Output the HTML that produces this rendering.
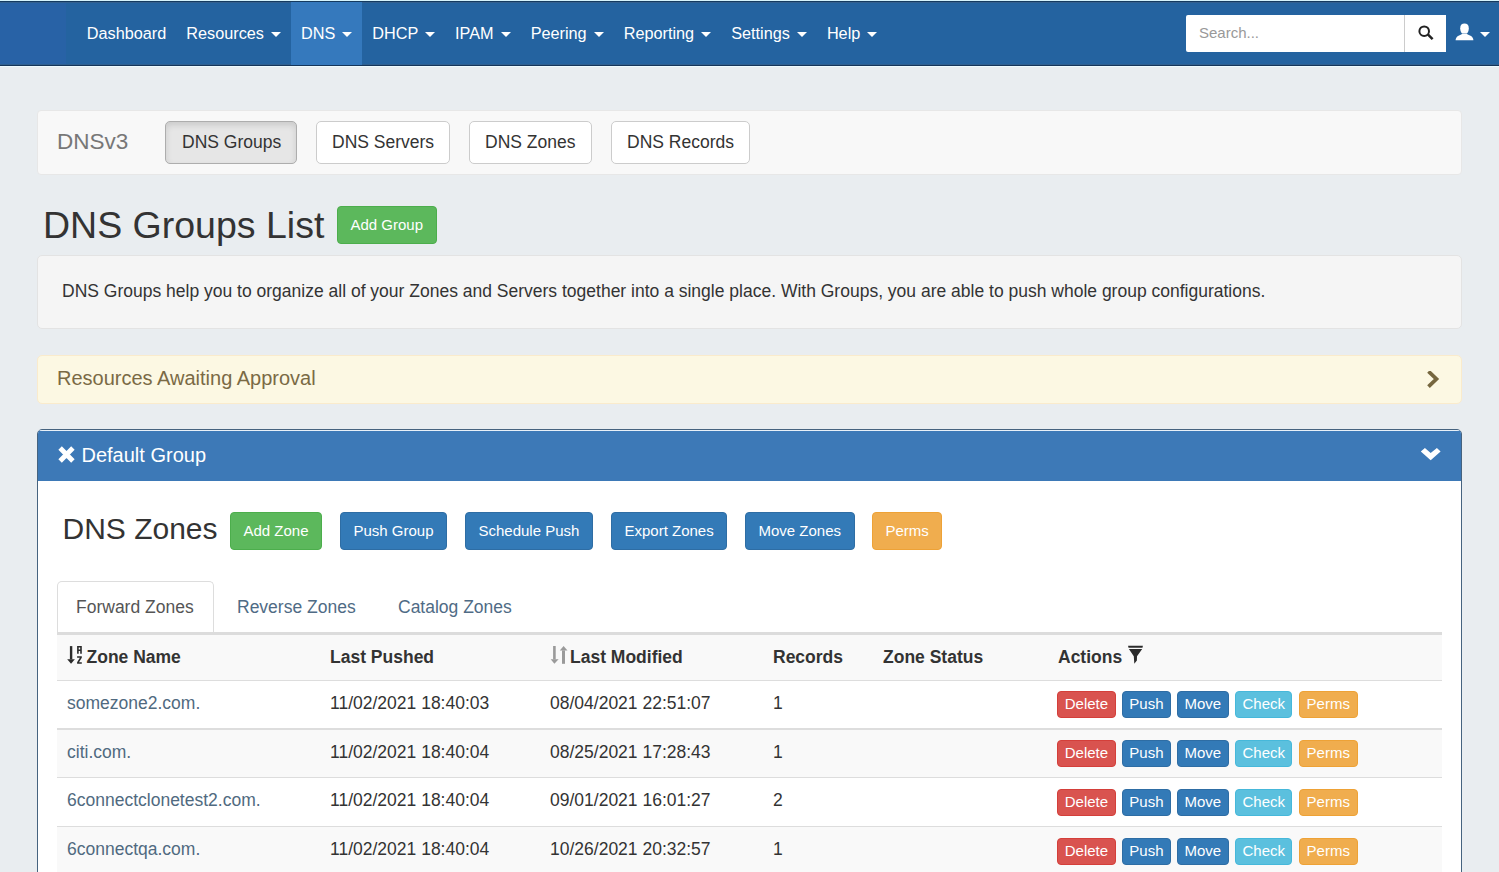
<!DOCTYPE html>
<html><head><meta charset="utf-8">
<style>
*{box-sizing:border-box}
html,body{margin:0;padding:0}
body{width:1499px;height:872px;overflow:hidden;background:#e9edf0;font-family:"Liberation Sans",sans-serif;color:#333;position:relative;font-size:17.5px;line-height:1.428571}
.abs{position:absolute}
/* navbar */
.nav{position:absolute;left:0;top:1px;width:1499px;height:65px;background:#2463a0;border-top:1px solid #143a60;border-bottom:1px solid #15355a}
.hl{position:absolute;left:0;width:1499px;height:1px}
.brand{position:absolute;left:0;top:0;width:66px;height:63px;background:#2862a6}
.menu{position:absolute;left:76.8px;top:0;height:63px;display:flex}
.menu a{display:block;height:63px;line-height:62px;padding:0 10px;color:#fff;font-size:16.25px;text-decoration:none;white-space:nowrap}
.menu a.act{background:#3579bd}
.caret{display:inline-block;width:0;height:0;margin-left:2.5px;vertical-align:middle;border-top:5px solid;border-left:5px solid transparent;border-right:5px solid transparent;position:relative;top:0}
.search{position:absolute;left:1186px;top:13px;width:260px;height:37px;background:#fff;border-radius:2px}
.search .ph{position:absolute;left:13px;top:0;line-height:36px;font-size:15px;color:#999}
.search .btn{position:absolute;left:218px;top:0;width:42px;height:37px;border-left:1px solid #ccc;background:#fff}
/* sub panel */
.sub{position:absolute;left:37px;top:110px;width:1425px;height:65px;background:#f8f8f8;border:1px solid #e7e7e7;border-radius:4px}
.sub .t{position:absolute;left:19px;top:0;line-height:62px;font-size:22.5px;color:#777}
.b{display:inline-block;border:1.25px solid #ccc;border-radius:5px;background:#fff;color:#333;white-space:nowrap;text-align:center}
.sbtn{position:absolute;top:10px;height:43px;line-height:40.5px;font-size:17.5px;padding:0 15px}
.sbtn.on{background:#e6e6e6;border-color:#adadad;box-shadow:inset 0 3px 6px rgba(0,0,0,.125)}
h2{position:absolute;left:43px;top:200px;margin:0;font-size:37.5px;font-weight:400;line-height:50px;color:#333}
.bs{position:absolute;height:37.5px;line-height:35px;font-size:15px;padding:0 12.5px;border-radius:4px;color:#fff}
.green{background:#5cb85c;border-color:#4cae4c}
.blue{background:#337ab7;border-color:#2e6da4}
.orange{background:#f0ad4e;border-color:#eea236}
.red{background:#d9534f;border-color:#d43f3a}
.cyan{background:#5bc0de;border-color:#46b8da}
.well{position:absolute;left:37px;top:255px;width:1425px;height:74px;background:#f5f5f5;border:1px solid #e3e3e3;border-radius:5px}
.well .t{position:absolute;left:24px;top:23px;font-size:17.5px;line-height:25px;color:#333}
.alert{position:absolute;left:37px;top:355px;width:1425px;height:48.5px;background:#fcf8e3;border:1px solid #faebcc;border-radius:5px}
.alert .t{position:absolute;left:19px;top:-1.5px;line-height:46px;font-size:20px;color:#7a6a45}
.panel{position:absolute;left:37px;top:429px;width:1425px;height:460px;background:#fff;border:1px solid #46637f;border-radius:5px;overflow:hidden}
.ph{}
.phead{position:absolute;left:0;top:0;width:1423px;height:51px;background:#3d79b7;border-top:1px solid #e8f0f8}
.phead .t{position:absolute;left:43.5px;top:0;line-height:49px;font-size:20px;color:#fff}
h3{position:absolute;left:24.5px;top:79px;margin:0;font-size:30px;font-weight:400;line-height:40px;color:#333}
.tabs{position:absolute;left:19px;top:151px;width:1385px;height:54px;border-bottom:3px solid #dcdcdc}
.tab{position:absolute;top:0;height:51px;line-height:53px;font-size:17.5px;color:#4f6b85}
.tab.on{line-height:51px;background:#fff;border:1px solid #ddd;border-bottom:0;border-radius:5px 5px 0 0;color:#555}
table{position:absolute;left:19px;top:205px;width:1385px;border-collapse:separate;border-spacing:0}
td,th{padding:0 10px;font-size:17.5px;text-align:left;vertical-align:middle;white-space:nowrap}
th{font-weight:700;height:45px;padding-top:0;background:#f9f9f9}
td{height:49px;border-top:1px solid #ddd;padding-bottom:2px}
tr.g td{background:#f9f9f9}
tr.r1 td{height:48px}
tr.r2 td{height:49px;border-top-width:2px}
tr.r3 td{height:49px;padding-bottom:4px}
tr.r4 td{padding-bottom:4px}
tr td.act{padding-left:9px;padding-bottom:0}
td a{color:#506a80;text-decoration:none}
.xs{display:inline-block;height:27px;line-height:24.5px;font-size:15px;padding:0;border-radius:4px;color:#fff;margin-right:6.4px}
</style></head><body>
<div class="hl" style="top:0;background:#d5f3fc"></div><div class="hl" style="top:66px;background:#eefbff"></div>
<div class="nav"><div class="brand"></div><div class="hl" style="top:0;background:#33608f"></div><div class="hl" style="top:62px;background:#30608f"></div>

  <div class="menu">
    <a>Dashboard</a>
    <a>Resources <span class="caret"></span></a>
    <a class="act">DNS <span class="caret"></span></a>
    <a>DHCP <span class="caret"></span></a>
    <a>IPAM <span class="caret"></span></a>
    <a>Peering <span class="caret"></span></a>
    <a>Reporting <span class="caret"></span></a>
    <a>Settings <span class="caret"></span></a>
    <a>Help <span class="caret"></span></a>
  </div>
  <div class="search"><span class="ph">Search...</span><div class="btn">
    <svg width="42" height="37" viewBox="0 0 42 37"><circle cx="19.2" cy="16.2" r="4.8" fill="none" stroke="#222" stroke-width="2"/><line x1="22.8" y1="19.4" x2="27.6" y2="24.2" stroke="#222" stroke-width="2.5" stroke-linecap="butt"/></svg>
  </div></div>
  <svg class="abs" style="left:1455px;top:21px" width="19" height="18" viewBox="0 0 19 18"><path d="M5.2 5.2 C5.2 1.8 7 0.4 9.5 0.4 C12 0.4 13.8 1.8 13.8 5.2 C13.8 8 12.6 10 11.8 10.6 L7.2 10.6 C6.4 10 5.2 8 5.2 5.2 Z" fill="#fff"/><path d="M0.6 17.2 C0.6 15.5 1.6 13.8 3.5 12.8 C5 12 6.5 11.4 7.5 10.8 L11.5 10.8 C12.5 11.4 14 12 15.5 12.8 C17.4 13.8 18.4 15.5 18.4 17.2 Z" fill="#fff"/></svg>
  <span class="caret" style="position:absolute;left:1480px;top:30px;color:#fff;margin:0"></span>
</div>

<div class="sub">
  <span class="t">DNSv3</span>
  <span class="b sbtn on" style="left:127px;padding:0 15px 0 16px">DNS Groups</span>
  <span class="b sbtn" style="left:278px">DNS Servers</span>
  <span class="b sbtn" style="left:431px;padding:0 16px 0 15px">DNS Zones</span>
  <span class="b sbtn" style="left:573px">DNS Records</span>
</div>

<h2>DNS Groups List</h2>
<span class="b bs green" style="left:337px;top:206px">Add Group</span>

<div class="well"><span class="t">DNS Groups help you to organize all of your Zones and Servers together into a single place. With Groups, you are able to push whole group configurations.</span></div>

<div class="alert"><span class="t">Resources Awaiting Approval</span>
  <svg class="abs" style="left:1387px;top:15px" width="16" height="20" viewBox="0 0 16 20"><path d="M3.5 0.4 L11.4 8.0 L3.5 15.6" fill="none" stroke="#76673f" stroke-width="3.8" stroke-linejoin="miter"/></svg>
</div>

<div class="panel">
  <div class="phead">
    <svg class="abs" style="left:20.2px;top:14.5px" width="17" height="17" viewBox="0 0 17 17"><path d="M2.1 2.1 L14.9 14.9 M14.9 2.1 L2.1 14.9" stroke="#fff" stroke-width="4.9"/></svg>
    <span class="t">Default Group</span>
    <svg class="abs" style="left:1377px;top:9.3px" width="30" height="30" viewBox="0 0 30 30"><polygon points="5.8,11.6 9.9,8.1 15.7,13.0 21.9,8.1 25.6,11.6 15.7,20.2" fill="#fff"/></svg>
  </div>
  <h3>DNS Zones</h3>
  <span class="b bs green" style="left:192px;top:82px">Add Zone</span>
  <span class="b bs blue" style="left:302px;top:82px">Push Group</span>
  <span class="b bs blue" style="left:427px;top:82px">Schedule Push</span>
  <span class="b bs blue" style="left:573px;top:82px">Export Zones</span>
  <span class="b bs blue" style="left:707px;top:82px">Move Zones</span>
  <span class="b bs orange" style="left:834px;top:82px">Perms</span>

  <div class="tabs">
    <span class="tab on" style="left:0;padding:0 19px 0 18px">Forward Zones</span>
    <span class="tab" style="left:180px">Reverse Zones</span>
    <span class="tab" style="left:341px">Catalog Zones</span>
  </div>
  <table>
    <tr><th style="width:263px;padding-left:29.5px;position:relative"><svg class="abs" style="left:10px;top:10px" width="16" height="20" viewBox="0 0 16 20"><rect x="2.9" y="1.1" width="2.4" height="13.3" fill="#2b2b2b"/><polygon points="0.2,14.2 7.9,14.2 4.05,18.8" fill="#2b2b2b"/><path fill-rule="evenodd" d="M10.1 8.7 V1.1 H14.8 V8.7 H13.2 V6 H11.7 V8.7 Z M11.7 2.6 H13.2 V4.4 H11.7 Z" fill="#2b2b2b"/><path d="M10.1 11.3 H14.8 V12.8 L12.0 17.3 H14.8 V18.8 H10.1 V17.3 L12.9 12.8 H10.1 Z" fill="#2b2b2b"/></svg>Zone Name</th><th style="width:220px">Last Pushed</th><th style="width:223px;padding-left:30px;position:relative"><svg class="abs" style="left:10px;top:10px" width="18" height="20" viewBox="0 0 18 20"><rect x="3.1" y="1" width="2.6" height="13.4" fill="#9a9a9a"/><polygon points="0.7,14.2 8.6,14.2 4.4,18.8" fill="#9a9a9a"/><rect x="12" y="5.4" width="3" height="13.4" fill="#9a9a9a"/><polygon points="9.8,5.6 17.5,5.6 13.6,1.1" fill="#9a9a9a"/></svg>Last Modified</th><th style="width:110px">Records</th><th style="width:175px">Zone Status</th><th style="position:relative">Actions<svg class="abs" style="left:80px;top:10px" width="16" height="20" viewBox="0 0 16 20"><polygon points="0.1,0.8 14.9,0.8 14.5,2.7 0.5,2.7" fill="#2b2b2b"/><polygon points="0.9,4 14.2,4 9,11.2 8.9,15.5 6.3,18.7 5.8,11.2" fill="#2b2b2b"/></svg></th></tr>
    <tr class="r1"><td><a>somezone2.com.</a></td><td>11/02/2021 18:40:03</td><td>08/04/2021 22:51:07</td><td>1</td><td></td><td class="act"><span class="b xs red" style="width:58.8px">Delete</span><span class="b xs blue" style="width:48.5px">Push</span><span class="b xs blue" style="width:51.6px">Move</span><span class="b xs cyan" style="width:57.4px">Check</span><span class="b xs orange" style="width:58.9px">Perms</span></td></tr>
    <tr class="g r2"><td><a>citi.com.</a></td><td>11/02/2021 18:40:04</td><td>08/25/2021 17:28:43</td><td>1</td><td></td><td class="act"><span class="b xs red" style="width:58.8px">Delete</span><span class="b xs blue" style="width:48.5px">Push</span><span class="b xs blue" style="width:51.6px">Move</span><span class="b xs cyan" style="width:57.4px">Check</span><span class="b xs orange" style="width:58.9px">Perms</span></td></tr>
    <tr class="r3"><td><a>6connectclonetest2.com.</a></td><td>11/02/2021 18:40:04</td><td>09/01/2021 16:01:27</td><td>2</td><td></td><td class="act"><span class="b xs red" style="width:58.8px">Delete</span><span class="b xs blue" style="width:48.5px">Push</span><span class="b xs blue" style="width:51.6px">Move</span><span class="b xs cyan" style="width:57.4px">Check</span><span class="b xs orange" style="width:58.9px">Perms</span></td></tr>
    <tr class="g r4"><td><a>6connectqa.com.</a></td><td>11/02/2021 18:40:04</td><td>10/26/2021 20:32:57</td><td>1</td><td></td><td class="act"><span class="b xs red" style="width:58.8px">Delete</span><span class="b xs blue" style="width:48.5px">Push</span><span class="b xs blue" style="width:51.6px">Move</span><span class="b xs cyan" style="width:57.4px">Check</span><span class="b xs orange" style="width:58.9px">Perms</span></td></tr>
  </table>
</div>
</body></html>
